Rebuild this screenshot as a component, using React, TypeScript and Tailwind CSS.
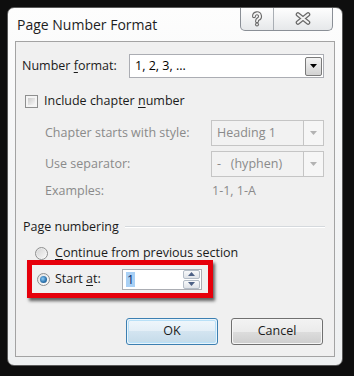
import React from "react";

function Tri({ color }: { color: string }) {
  return (
    <svg width="7" height="4" viewBox="0 0 7 4">
      <polygon points="0,0 7,0 3.5,4" fill={color} />
    </svg>
  );
}

function Checkbox() {
  return (
    <div className="w-[13px] h-[13px] border border-[#8e8f8f] bg-[#f4f4f4] p-[2px]">
      <div className="w-full h-full bg-gradient-to-br from-[#cbcbcb] to-[#f7f7f7]" />
    </div>
  );
}

function Radio({ checked }: { checked?: boolean }) {
  return (
    <div className="w-[13px] h-[13px] rounded-full border border-[#8e8f8f] bg-gradient-to-br from-[#e2e2e2] to-[#fdfdfd] flex items-center justify-center">
      {checked ? (
        <div className="w-[7px] h-[7px] rounded-full bg-[radial-gradient(circle_at_40%_40%,#8fcdf7,#2f76b0_55%,#174b7a)]" />
      ) : (
        <div className="w-[9px] h-[9px] rounded-full bg-gradient-to-br from-[#d6d6d6] to-[#f7f7f7]" />
      )}
    </div>
  );
}

function Spin() {
  return (
    <div className="w-[80px] h-[21px] border border-[#abadb3] bg-white flex items-center">
      <div className="flex-1 pl-[3px] flex items-center">
        <span className="bg-[#a9d0f5] text-[#0b2a6a] px-[1px] leading-[15px]">1</span>
      </div>
      <div className="w-[17px] h-[19px] mr-[1px] flex flex-col gap-[1px]">
        <div className="h-[9px] border border-[#b4bdc7] rounded-[2px] bg-gradient-to-b from-[#f8f9fa] to-[#dfe3e8] flex items-center justify-center">
          <svg width="7" height="4" viewBox="0 0 7 4"><polygon points="0,4 7,4 3.5,0" fill="#4d6185" /></svg>
        </div>
        <div className="h-[9px] border border-[#b4bdc7] rounded-[2px] bg-gradient-to-b from-[#f8f9fa] to-[#dfe3e8] flex items-center justify-center">
          <svg width="7" height="4" viewBox="0 0 7 4"><polygon points="0,0 7,0 3.5,4" fill="#4d6185" /></svg>
        </div>
      </div>
    </div>
  );
}

function DisabledCombo({ text }: { text: string }) {
  return (
    <div className="w-[113px] h-[26px] border border-[#c5c5c5] bg-[#f2f2f2] flex items-stretch">
      <div className="flex-1 pl-[5px] flex items-center text-[#8a8a8a] whitespace-pre">{text}</div>
      <div className="w-[20px] border-l border-[#c5c5c5] bg-[#f6f6f6] flex items-center justify-center">
        <Tri color="#b3b3b3" />
      </div>
    </div>
  );
}

export default function App() {
  return (
    <div className="w-[354px] h-[376px] bg-[#0e0e0e] pt-[7px] pl-[7px] font-['Open_Sans',sans-serif] text-[12.5px] text-[#1b1b1b] leading-none">
      <div className="w-[336px] h-[359px] rounded-[7px] border border-[#5a5a5a] bg-gradient-to-b from-[#fdfdfd] via-[#f3f4f5] to-[#eef0f1] flex flex-col overflow-hidden">
        {/* title bar */}
        <div className="h-[33px] flex justify-between">
          <div className="pl-[9px] pt-[10px] text-[14px] text-[#1e1e1e]">Page Number Format</div>
          <div className="mr-[9px] -mt-[1px] h-[24px] w-[93px] flex border border-t-0 border-[#8a8f96] rounded-b-[5px] bg-gradient-to-b from-[#ffffff] to-[#e6e8ea] overflow-hidden">
            <div className="w-[33px] border-r border-[#a9aeb4] flex items-center justify-center">
              <svg width="12" height="16" viewBox="0 0 12 16">
                <path d="M3 5.2 A3 3 0 1 1 7.2 8 C6 8.6 6 9.2 6 10.2" fill="none" stroke="#6a6a6a" strokeWidth="4" strokeLinecap="round" />
                <circle cx="6" cy="13.4" r="2" fill="#6a6a6a" />
                <path d="M3 5.2 A3 3 0 1 1 7.2 8 C6 8.6 6 9.2 6 10.2" fill="none" stroke="#f4f4f4" strokeWidth="1.8" strokeLinecap="round" />
                <circle cx="6" cy="13.4" r="0.9" fill="#f4f4f4" />
              </svg>
            </div>
            <div className="flex-1 flex items-center justify-center">
              <svg width="18" height="13" viewBox="0 0 18 13">
                <path d="M4 2.5 L14 10.5 M14 2.5 L4 10.5" stroke="#6a6a6a" strokeWidth="4.6" strokeLinecap="round" />
                <path d="M4 2.5 L14 10.5 M14 2.5 L4 10.5" stroke="#f2f2f2" strokeWidth="2.2" strokeLinecap="round" />
              </svg>
            </div>
          </div>
        </div>

        {/* client */}
        <div className="mx-[7px] h-[316px] border border-[#a3a3a3] bg-[#f0f0f0] flex flex-col">
          <div className="mt-[12px] h-[24px] flex items-center pl-[6px]">
            <div className="w-[107px]">
              Number <span className="underline underline-offset-2">f</span>ormat:
            </div>
            <div className="w-[195px] h-[24px] border border-[#abadb3] bg-white flex items-center">
              <div className="flex-1 pl-[5px] text-[#000]">1, 2, 3, ...</div>
              <div className="w-[17px] h-[19px] mr-[1px] border border-[#7a7a7a] rounded-[2px] bg-gradient-to-b from-[#f4f4f4] to-[#d2d2d2] flex items-center justify-center">
                <Tri color="#000" />
              </div>
            </div>
          </div>

          <div className="mt-[12px] h-[22px] flex items-center pl-[9px] gap-[6px]">
            <Checkbox />
            <div>
              Include chapter <span className="underline underline-offset-2">n</span>umber
            </div>
          </div>

          <div className="mt-[8px] h-[26px] flex items-center pl-[29px] text-[#8a8a8a]">
            <div className="w-[166px]">Chapter starts with style:</div>
            <DisabledCombo text="Heading 1" />
          </div>

          <div className="mt-[5px] h-[26px] flex items-center pl-[29px] text-[#8a8a8a]">
            <div className="w-[166px]">Use separator:</div>
            <DisabledCombo text={"-   (hyphen)"} />
          </div>

          <div className="mt-[5px] h-[18px] flex items-center pl-[29px] text-[#8a8a8a]">
            <div className="w-[167px]">Examples:</div>
            <div>1-1, 1-A</div>
          </div>

          <div className="mt-[18px] h-[18px] flex items-center pl-[7px] pr-[9px]">
            <div>Page numbering</div>
            <div className="flex-1 ml-[6px] h-[2px] border-t border-[#d5d9dd] border-b border-b-white" />
          </div>

          <div className="mt-[8px] h-[18px] flex items-center pl-[19px] gap-[7px]">
            <Radio />
            <div>
              <span className="underline underline-offset-2">C</span>ontinue from previous section
            </div>
          </div>

          <div className="-mt-[2px] ml-[11px] w-[186px] h-[38px] border-[5px] border-[#e6000b] shadow-[2px_3px_3px_rgba(0,0,0,0.6)] flex items-center pl-[5px]">
            <Radio checked />
            <div className="ml-[5px] w-[67px]">
              Start <span className="underline underline-offset-2">a</span>t:
            </div>
            <Spin />
          </div>

          <div className="mt-[20px] h-[27px] flex justify-end pr-[11px] gap-[13px]">
            <div className="w-[92px] h-[27px] rounded-[3px] border border-[#3c7fb1] p-[1px] bg-[#e9f4fb]">
              <div className="w-full h-full rounded-[2px] border border-[#b8e0f7] bg-[linear-gradient(#eef6fb_0%,#e3eef6_50%,#d3e4f0_50%,#c6dcea_100%)] flex items-center justify-center">
                OK
              </div>
            </div>
            <div className="w-[92px] h-[27px] rounded-[3px] border border-[#707070] p-[1px] bg-[#f6f6f6]">
              <div className="w-full h-full rounded-[2px] bg-[linear-gradient(#f2f2f2_0%,#ebebeb_50%,#dddddd_50%,#cfcfcf_100%)] flex items-center justify-center">
                Cancel
              </div>
            </div>
          </div>
        </div>
      </div>
    </div>
  );
}
